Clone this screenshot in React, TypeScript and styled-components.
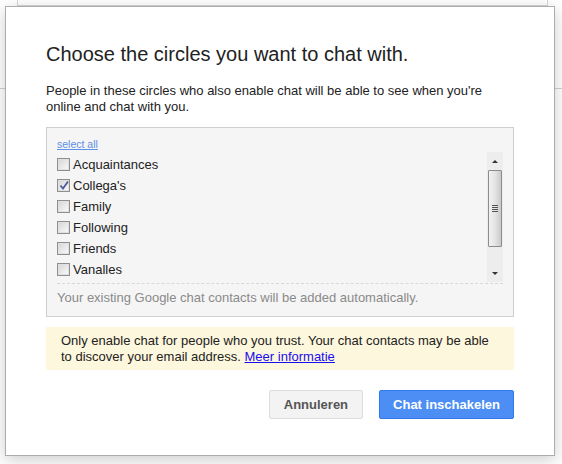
import React from "react";
import styled, { createGlobalStyle } from "styled-components";

const GlobalStyle = createGlobalStyle`
  html, body {
    margin: 0;
    padding: 0;
    background: #fff;
    font-family: Arial, "Liberation Sans", sans-serif;
  }
`;

const Page = styled.div`
  position: relative;
  width: 562px;
  height: 464px;
  overflow: hidden;
  background: #fff;
`;

const BackCard = styled.div`
  margin: -10px 14px 0 17px;
  height: 14px;
  border: 1px solid #d6d6d6;
  background: #fff;
`;

const BackRule = styled.div`
  margin-top: 82px;
  height: 1px;
  background: #d0d0d0;
`;

const Dialog = styled.div`
  position: absolute;
  left: 5px;
  top: 6px;
  width: 550px;
  height: 450px;
  box-sizing: border-box;
  background: #fff;
  border: 1px solid #acacac;
  box-shadow: 0 4px 16px rgba(0, 0, 0, 0.2);
  padding: 35px 40px 0 40px;
  display: flex;
  flex-direction: column;
`;

const Title = styled.h2`
  margin: 0;
  font-size: 20px;
  font-weight: normal;
  line-height: 24px;
  color: #222;
`;

const Intro = styled.p`
  margin: 17px 0 0;
  font-size: 13px;
  line-height: 16px;
  color: #222;
`;

const CircleBox = styled.div`
  margin-top: 12px;
  height: 190px;
  box-sizing: border-box;
  border: 1px solid #cfcfcf;
  background: #f5f5f5;
  padding: 10px 10px 0 10px;
  display: flex;
  flex-direction: column;
`;

const SelectAll = styled.a`
  font-size: 10.5px;
  line-height: 12px;
  color: #5c8fe6;
  text-decoration: underline;
  cursor: pointer;
`;

const ListArea = styled.div`
  display: flex;
  margin-top: 1px;
  height: 132px;
  border-bottom: 1px dashed #d8d8d8;
`;

const List = styled.div`
  flex: 1;
  display: flex;
  flex-direction: column;
  padding-top: 3px;
`;

const Row = styled.label`
  display: flex;
  align-items: center;
  gap: 3px;
  height: 21px;
  font-size: 13px;
  color: #222;
`;

const Box = styled.span`
  position: relative;
  width: 13px;
  height: 13px;
  box-sizing: border-box;
  border: 1px solid #8f8f8f;
  background: linear-gradient(135deg, #d4d4d4 0%, #eeeeee 65%, #fbfbfb 100%);
  box-shadow: inset 0 0 0 1px #e0e0e0;
`;

const Scrollbar = styled.div`
  width: 16px;
  height: 130px;
  margin-top: 1px;
  background: #ededed;
  border-left: 1px solid #f6f6f6;
  display: flex;
  flex-direction: column;
  align-items: center;
`;

const Arrow = styled.div<{ $down?: boolean }>`
  height: 18px;
  width: 100%;
  display: flex;
  align-items: center;
  justify-content: center;
  &::before {
    content: "";
    width: 0;
    height: 0;
    border-left: 3px solid transparent;
    border-right: 3px solid transparent;
    ${(p) => (p.$down ? "border-top: 3px solid #333;" : "border-bottom: 3px solid #333;")}
  }
`;

const Thumb = styled.div`
  width: 14px;
  height: 77px;
  box-sizing: border-box;
  border: 1px solid #8c8c8c;
  border-radius: 1px;
  background: linear-gradient(90deg, #f2f2f2 0%, #e4e4e4 50%, #c9c9c9 100%);
  display: flex;
  flex-direction: column;
  align-items: center;
  justify-content: center;
  gap: 1px;
`;

const Grip = styled.span`
  width: 6px;
  height: 1px;
  background: #555;
`;

const Track = styled.div`
  flex: 1;
`;

const BoxNote = styled.div`
  padding-top: 6px;
  font-size: 13px;
  color: #8a8a8a;
`;

const Warning = styled.div`
  margin-top: 10px;
  background: #fdf7dd;
  padding: 6px 15px 5px 15px;
  font-size: 13px;
  line-height: 16px;
  color: #222;
`;

const InfoLink = styled.a`
  color: #1a0dee;
  text-decoration: underline;
  cursor: pointer;
`;

const Actions = styled.div`
  margin-top: 20px;
  display: flex;
  justify-content: flex-end;
  gap: 16px;
`;

const Button = styled.button<{ $primary?: boolean }>`
  height: 29px;
  box-sizing: border-box;
  padding: 0 ${(p) => (p.$primary ? "13px" : "14px")};
  font-family: Arial, "Liberation Sans", sans-serif;
  font-size: 13px;
  font-weight: bold;
  border-radius: 2px;
  cursor: pointer;
  border: 1px solid ${(p) => (p.$primary ? "#3079ed" : "#dcdcdc")};
  background: ${(p) => (p.$primary ? "#4c8ef4" : "#f3f3f3")};
  color: ${(p) => (p.$primary ? "#fff" : "#555")};
`;

const circles = [
  { name: "Acquaintances", checked: false },
  { name: "Collega's", checked: true },
  { name: "Family", checked: false },
  { name: "Following", checked: false },
  { name: "Friends", checked: false },
  { name: "Vanalles", checked: false },
];

const Check = () => (
  <svg width="11" height="11" viewBox="0 0 11 11" style={{ position: "absolute", left: 1, top: 0 }}>
    <path d="M1.5 5.5 L4 8.5 L9 1.5" stroke="#4a5c9a" strokeWidth="1.8" fill="none" />
  </svg>
);

export default function App() {
  return (
    <Page>
      <GlobalStyle />
      <BackCard />
      <BackRule />
      <Dialog>
        <Title>Choose the circles you want to chat with.</Title>
        <Intro>
          People in these circles who also enable chat will be able to see when you're
          <br />
          online and chat with you.
        </Intro>
        <CircleBox>
          <SelectAll>select all</SelectAll>
          <ListArea>
            <List>
              {circles.map((c) => (
                <Row key={c.name}>
                  <Box>{c.checked && <Check />}</Box>
                  {c.name}
                </Row>
              ))}
            </List>
            <Scrollbar>
              <Arrow />
              <Thumb>
                <Grip />
                <Grip />
                <Grip />
                <Grip />
              </Thumb>
              <Track />
              <Arrow $down />
            </Scrollbar>
          </ListArea>
          <BoxNote>Your existing Google chat contacts will be added automatically.</BoxNote>
        </CircleBox>
        <Warning>
          Only enable chat for people who you trust. Your chat contacts may be able
          <br />
          to discover your email address. <InfoLink>Meer informatie</InfoLink>
        </Warning>
        <Actions>
          <Button>Annuleren</Button>
          <Button $primary>Chat inschakelen</Button>
        </Actions>
      </Dialog>
    </Page>
  );
}
